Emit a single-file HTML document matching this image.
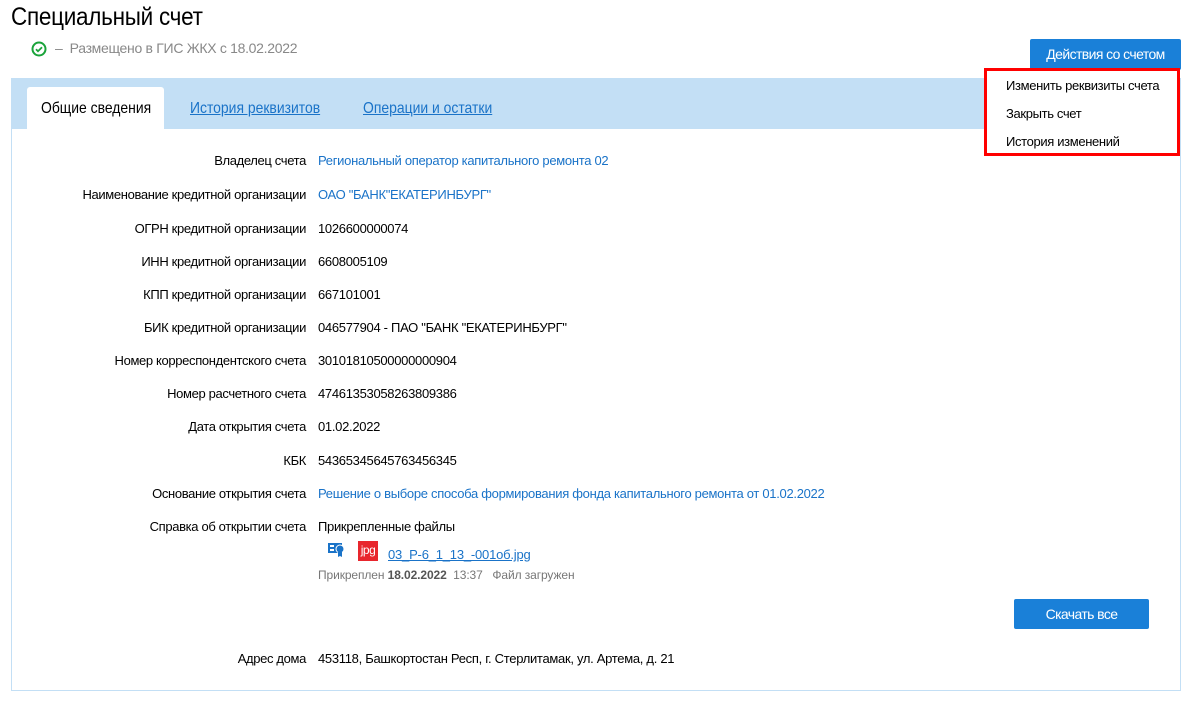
<!DOCTYPE html><html><head><meta charset="utf-8"><style>
body{margin:0;width:1193px;height:701px;background:#fff;font-family:"Liberation Sans",sans-serif;color:#000;position:relative;overflow:hidden}
.a{position:absolute;white-space:nowrap}
h1{position:absolute;left:11px;top:3px;margin:0;font-size:25px;font-weight:normal;transform:scaleX(0.9);transform-origin:0 0;letter-spacing:-0.3px}
.panel{position:absolute;left:11px;top:78px;width:1168px;height:611px;border:1px solid #c3dff5}
.band{position:absolute;left:0;top:0;width:1168px;height:50px;background:#c3dff5}
.tab{position:absolute;left:15px;top:8px;width:137px;height:42px;background:#fff;border-radius:3px 3px 0 0}
.tl{position:absolute;top:21px;font-size:16px;transform:scaleX(0.87);transform-origin:0 0;white-space:nowrap}
.link{color:#1a73c8;text-decoration:underline}
.lbl{position:absolute;right:887px;font-size:13px;letter-spacing:-0.35px;text-align:right;white-space:nowrap}
.val{position:absolute;left:318px;font-size:13px;letter-spacing:-0.3px;white-space:nowrap}
.b{color:#1a73c8}
.btn{position:absolute;background:#1a80d8;color:#fff;font-size:14px;text-align:center;border-radius:2px;letter-spacing:-0.6px}
.dd{position:absolute;left:19px;font-size:13px;letter-spacing:-0.35px}
</style></head><body>
<h1>Специальный счет</h1>
<svg class="a" style="left:31px;top:41px" width="16" height="16" viewBox="0 0 16 16"><circle cx="8" cy="8" r="6.5" fill="none" stroke="#1aa33a" stroke-width="2"/><path d="M5 8.2l2 2 4-4" fill="none" stroke="#1aa33a" stroke-width="1.8"/></svg>
<div class="a" style="left:55px;top:40px;font-size:14px;color:#888;letter-spacing:-0.3px">–&nbsp; Размещено в ГИС ЖКХ с 18.02.2022</div>
<div class="panel"><div class="band"></div><div class="tab"></div>
<div class="tl" style="left:29px">Общие сведения</div>
<div class="tl link" style="left:178px">История реквизитов</div>
<div class="tl link" style="left:351px">Операции и остатки</div></div>
<div class="btn" style="left:1030px;top:39px;width:151px;height:31px;line-height:31px">Действия со счетом</div>
<div class="a" style="left:984px;top:68px;width:190px;height:82px;border:3px solid #f00;background:#fff">
<div class="dd" style="top:7px">Изменить реквизиты счета</div>
<div class="dd" style="top:35px">Закрыть счет</div>
<div class="dd" style="top:63px">История изменений</div></div>
<div class="lbl" style="top:153px">Владелец счета</div><div class="val b" style="top:153px">Региональный оператор капитального ремонта 02</div>
<div class="lbl" style="top:187px">Наименование кредитной организации</div><div class="val b" style="top:187px">ОАО "БАНК"ЕКАТЕРИНБУРГ"</div>
<div class="lbl" style="top:221px">ОГРН кредитной организации</div><div class="val" style="top:221px">1026600000074</div>
<div class="lbl" style="top:254px">ИНН кредитной организации</div><div class="val" style="top:254px">6608005109</div>
<div class="lbl" style="top:287px">КПП кредитной организации</div><div class="val" style="top:287px">667101001</div>
<div class="lbl" style="top:320px">БИК кредитной организации</div><div class="val" style="top:320px">046577904 - ПАО "БАНК "ЕКАТЕРИНБУРГ"</div>
<div class="lbl" style="top:353px">Номер корреспондентского счета</div><div class="val" style="top:353px">30101810500000000904</div>
<div class="lbl" style="top:386px">Номер расчетного счета</div><div class="val" style="top:386px">47461353058263809386</div>
<div class="lbl" style="top:419px">Дата открытия счета</div><div class="val" style="top:419px">01.02.2022</div>
<div class="lbl" style="top:453px">КБК</div><div class="val" style="top:453px">54365345645763456345</div>
<div class="lbl" style="top:486px">Основание открытия счета</div><div class="val b" style="top:486px">Решение о выборе способа формирования фонда капитального ремонта от 01.02.2022</div>
<div class="lbl" style="top:519px">Справка об открытии счета</div><div class="val" style="top:519px">Прикрепленные файлы</div>
<svg class="a" style="left:328px;top:542px" width="18" height="16" viewBox="0 0 18 16"><rect x="0" y="1" width="14" height="10" fill="#1a73c8"/><rect x="2" y="3" width="4" height="2" fill="#fff"/><rect x="2" y="7" width="4" height="2" fill="#fff"/><circle cx="12" cy="7" r="4" fill="#1a73c8" stroke="#fff"/><path d="M10 10l0 5 2-1 2 1 0-5" fill="#1a73c8"/></svg>
<div class="a" style="left:358px;top:541px;width:20px;height:20px;background:#e8262d;color:#fff;font-size:12px;text-align:center;line-height:19px;letter-spacing:-0.5px">jpg</div>
<div class="a" style="left:388px;top:547px;font-size:13px;color:#1a73c8;text-decoration:underline;letter-spacing:-0.2px">03_Р-6_1_13_-001об.jpg</div>
<div class="a" style="left:318px;top:568px;font-size:12px;color:#777;letter-spacing:-0.1px">Прикреплен <b style="color:#555">18.02.2022</b>&nbsp; 13:37 &nbsp; Файл загружен</div>
<div class="btn" style="left:1014px;top:599px;width:135px;height:30px;line-height:30px">Скачать все</div>
<div class="lbl" style="top:651px">Адрес дома</div><div class="val" style="top:651px">453118, Башкортостан Респ, г. Стерлитамак, ул. Артема, д. 21</div>
</body></html>
